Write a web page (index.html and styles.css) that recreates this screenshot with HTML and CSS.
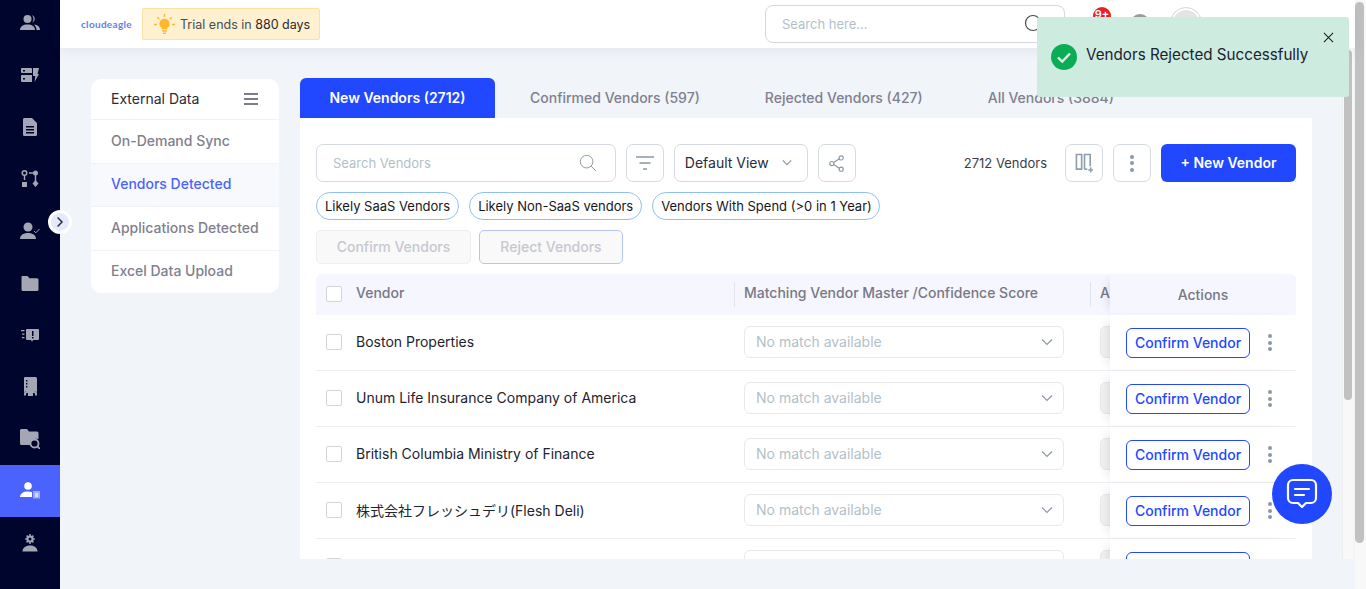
FILE: index.html
```html
<!DOCTYPE html>
<html lang="en">
<head>
    <meta charset="UTF-8">
    <meta name="viewport" content="width=device-width, initial-scale=1.0">
    <title>Vendors Detected</title>
    <link rel="stylesheet" href="styles.css">
</head>
<body>
<div class="app">
    <nav class="sidenav">
        <a class="nav-item"><svg viewBox="0 0 20 20" class="nav-icon"><circle cx="7.5" cy="6" r="4"/><path d="M0 17c0-3.5 3-5.5 7.5-5.5S15 13.500 15 17z"/><path d="M12 2.200a4 4 0 0 1 0 7.600 5.500 5.500 0 0 0 0-7.600zM14 11.500c3.500.3 6 2.200 6 5.500h-3.500c0-2.200-1-4-2.500-5.500z"/></svg></a>
        <a class="nav-item"><svg viewBox="0 0 20 20" class="nav-icon"><path d="M2 3h9a1 1 0 0 1 1 1v4H2a1 1 0 0 1-1-1V4a1 1 0 0 1 1-1zM2 10h10v7H2a1 1 0 0 1-1-1v-5a1 1 0 0 1 1-1zM13 3h6l-1.500 6H19l-4.500 8 .8-6H13z"/><path d="M3 5h2v1.500H3zM3 13h2v1.500H3z" fill="#00052e"/></svg></a>
        <a class="nav-item"><svg viewBox="0 0 20 20" class="nav-icon"><path d="M4 1h8l5 5v11.500a1.500 1.500 0 0 1-1.500 1.500h-11A1.500 1.500 0 0 1 3 17.500v-15A1.500 1.500 0 0 1 4 1z"/><path d="M6 9h8v1.500H6zM6 12h8v1.500H6zM6 15h8v1.500H6z" fill="#00052e"/></svg></a>
        <a class="nav-item"><svg viewBox="0 0 20 20" class="nav-icon"><circle cx="4.500" cy="4" r="2.300" fill="none" stroke="#a4a6b4" stroke-width="1.500"/><path d="M3.800 6h1.400v5H3.800zM2 13h5v5H2zM9 3.300h5v1.400H9z"/><circle cx="15.500" cy="4" r="2.500"/><path d="M14.800 6h1.400v6h-1.400z"/><path d="M15.500 11l3 3.500-3 3.500-3-3.500z"/></svg></a>
        <a class="nav-item"><svg viewBox="0 0 20 20" class="nav-icon"><circle cx="8" cy="6" r="4.500"/><path d="M0 18c0-3.800 3.300-6 8-6s8 2.200 8 6z"/><path d="M14 10l1.800 1.800L19.500 8" fill="none" stroke="#a4a6b4" stroke-width="1"/></svg></a>
        <a class="nav-item"><svg viewBox="0 0 20 20" class="nav-icon"><path d="M2 3h5.500l2 2.200H17a1.500 1.500 0 0 1 1.500 1.500v9.800A1.500 1.500 0 0 1 17 18H3a1.500 1.500 0 0 1-1.500-1.500V3.500z"/></svg></a>
        <a class="nav-item"><svg viewBox="0 0 20 20" class="nav-icon"><path d="M7 4h11a1 1 0 0 1 1 1v9a1 1 0 0 1-1 1h-5l-1 2-1-2H7a1 1 0 0 1-1-1V5a1 1 0 0 1 1-1z"/><path d="M12 6h1.500v5H12zM12 12h1.500v1.500H12z" fill="#00052e"/><path d="M1 5h3.500v1.200H1zM2 8.500h2.500v1.200H2zM2 12h2.500v1.200H2z"/></svg></a>
        <a class="nav-item"><svg viewBox="0 0 20 20" class="nav-icon"><path d="M5 0h10.500A1.500 1.500 0 0 1 17 1.500V17a3 3 0 0 0-3-3H7a3 3 0 0 0-3 3V1a1 1 0 0 1 1-1z"/><path d="M6 3h1.400v1.400H6zM6 6h1.400v1.400H6zM6 9h1.400v1.400H6z" fill="#00052e"/><path d="M8 16h5v3H8z"/><path d="M4 17a3 3 0 0 1 3-3h7a3 3 0 0 1 3 3v1.500h-2V17a1 1 0 0 0-1-1H7a1 1 0 0 0-1 1v1.500H4z"/></svg></a>
        <a class="nav-item"><svg viewBox="0 0 20 20" class="nav-icon"><path d="M1 0h6l2 2.500h8a1.500 1.500 0 0 1 1.500 1.500v6a6 6 0 0 0-8 6H1.500A1.500 1.500 0 0 1 0 14.500V1z"/><circle cx="14.500" cy="14.500" r="4" fill="#00052e" stroke="#a4a6b4" stroke-width="1.800"/><path d="M17.500 17.500L20 20" stroke="#a4a6b4" stroke-width="1.800"/></svg></a>
        <a class="nav-item nav-active"><svg viewBox="0 0 20 20" class="nav-icon icon-white"><circle cx="8" cy="5" r="3.800"/><path d="M0 16c0-3.500 3.300-5.500 8-5.500 1.500 0 2.800.2 4 .7V16z"/><path d="M13 10h7v7.500h-7z" opacity=".45"/><path d="M15 12h3v4h-3z" opacity=".6"/></svg></a>
        <a class="nav-item"><svg viewBox="0 0 20 20" class="nav-icon"><path d="M10 1v10M5.200 6h9.600M6.600 2.600l6.800 6.800M13.400 2.600L6.600 9.400" stroke="#a4a6b4" stroke-width="1.500"/><circle cx="10" cy="6" r="3.600" fill="#a4a6b4"/><circle cx="10" cy="6" r="1.500" fill="#00052e"/><path d="M2.500 18.500c0-3.500 3-6 7.500-6s7.500 2.500 7.500 6z"/></svg></a>
    </nav>
    <button class="nav-toggle"><svg viewBox="0 0 10 14" width="8" height="12"><path d="M2 1.500L7.500 7 2 12.500" fill="none" stroke="#23294d" stroke-width="1.800"/></svg></button>

    <div class="main">
        <header class="topbar">
            <span class="logo">cloudeagle</span>
            <div class="trial">
                <svg viewBox="0 0 22 22" width="21" height="21"><path d="M11 5a5.200 5.200 0 0 0-3 9.500V16h6v-1.500A5.200 5.200 0 0 0 11 5zM8.500 17h5v1.500h-5zM9.500 19.300h3V21h-3z" fill="#fdb92c"/><path d="M11 0v3M3.500 3.500l2 2M18.500 3.500l-2 2M0 11h3M19 11h3" stroke="#fdb92c" stroke-width="1.400"/></svg>
                <span>Trial ends in <b>880 days</b></span>
            </div>
            <div class="top-search">
                <span>Search here...</span>
                <svg viewBox="0 0 20 20" width="20" height="20"><circle cx="9" cy="9" r="7.500" fill="none" stroke="#4a4a4a" stroke-width="1.200"/><path d="M14.500 14.500L19 19" stroke="#4a4a4a" stroke-width="1.200"/></svg>
            </div>
            <div class="top-icons">
                <span class="badge">9+</span>
                <span class="help-dot"></span>
                <span class="avatar"></span>
            </div>
        </header>

        <div class="body">
            <div class="scroll-area">
                <aside class="side-card">
                    <div class="side-head">
                        <span>External Data</span>
                        <svg viewBox="0 0 14 12" width="14" height="12"><path d="M0 1h14M0 6h14M0 11h14" stroke="#50536a" stroke-width="1.600"/></svg>
                    </div>
                    <a class="side-link">On-Demand Sync</a>
                    <a class="side-link side-active">Vendors Detected</a>
                    <a class="side-link">Applications Detected</a>
                    <a class="side-link">Excel Data Upload</a>
                </aside>

                <section class="vendors">
                    <div class="tabs">
                        <a class="tab tab-active">New Vendors (2712)</a>
                        <a class="tab">Confirmed Vendors (597)</a>
                        <a class="tab">Rejected Vendors (427)</a>
                        <a class="tab">All Vendors (3884)</a>
                    </div>
                    <div class="panel">
                        <div class="toolbar">
                            <div class="search-box">
                                <span>Search Vendors</span>
                                <svg viewBox="0 0 20 20" width="18" height="18"><circle cx="8.500" cy="8.500" r="7" fill="none" stroke="#8f98a3" stroke-width="1.100"/><path d="M13.500 13.500L19 19" stroke="#8f98a3" stroke-width="1.100"/></svg>
                            </div>
                            <button class="icon-btn"><svg viewBox="0 0 18 14" width="18" height="14"><path d="M0 1h18M3.500 7h11M7 13h4" stroke="#8c98a4" stroke-width="1.500"/></svg></button>
                            <div class="view-select">
                                <span>Default View</span>
                                <svg viewBox="0 0 12 8" width="10" height="7"><path d="M1 1.500l5 5 5-5" fill="none" stroke="#8c98a4" stroke-width="1.400"/></svg>
                            </div>
                            <button class="icon-btn"><svg viewBox="0 0 16 18" width="15" height="17"><circle cx="13" cy="3" r="2.200" fill="none" stroke="#8c98a4" stroke-width="1.200"/><circle cx="3" cy="9" r="2.200" fill="none" stroke="#8c98a4" stroke-width="1.200"/><circle cx="13" cy="15" r="2.200" fill="none" stroke="#8c98a4" stroke-width="1.200"/><path d="M5 8l6-4M5 10l6 4" stroke="#8c98a4" stroke-width="1.200"/></svg></button>
                            <span class="count">2712 Vendors</span>
                            <button class="icon-btn"><svg viewBox="0 0 20 21" width="19" height="20"><path d="M1.500 1.500h5.500v15.500H1.500zM10 17V1.500h6V14" fill="none" stroke="#8c9eab" stroke-width="1.700"/><path d="M10 17h3" stroke="#8c9eab" stroke-width="1.700"/><path d="M16.500 15v5.500M14 17.800h5" stroke="#8c9eab" stroke-width="1.600"/></svg></button>
                            <button class="icon-btn"><span class="dots"></span></button>
                            <button class="btn-new">+ New Vendor</button>
                        </div>
                        <div class="chips">
                            <span class="chip">Likely SaaS Vendors</span>
                            <span class="chip">Likely Non-SaaS vendors</span>
                            <span class="chip chip-last">Vendors With Spend (&gt;0 in 1 Year)</span>
                        </div>
                        <div class="bulk">
                            <button class="bulk-btn">Confirm Vendors</button>
                            <button class="bulk-btn bulk-reject">Reject Vendors</button>
                        </div>
                        <div class="table">
                            <div class="row row-head">
                                <div class="cell-name"><span class="check"></span>Vendor</div>
                                <div class="cell-match"><span>Matching Vendor Master /Confidence Score</span></div>
                                <div class="cell-extra"><span>A</span></div>
                                <div class="cell-actions">Actions</div>
                            </div>
                            <div class="row">
                                <div class="cell-name"><span class="check"></span>Boston Properties</div>
                                <div class="cell-match"><div class="match-select">No match available<svg viewBox="0 0 12 8" width="12" height="8"><path d="M1 1.500l5 5 5-5" fill="none" stroke="#8c98a4" stroke-width="1.200"/></svg></div></div>
                                <div class="cell-extra"><span class="stub"></span></div>
                                <div class="cell-actions"><button class="btn-confirm">Confirm Vendor</button><span class="dots"></span></div>
                            </div>
                            <div class="row">
                                <div class="cell-name"><span class="check"></span>Unum Life Insurance Company of America</div>
                                <div class="cell-match"><div class="match-select">No match available<svg viewBox="0 0 12 8" width="12" height="8"><path d="M1 1.500l5 5 5-5" fill="none" stroke="#8c98a4" stroke-width="1.200"/></svg></div></div>
                                <div class="cell-extra"><span class="stub"></span></div>
                                <div class="cell-actions"><button class="btn-confirm">Confirm Vendor</button><span class="dots"></span></div>
                            </div>
                            <div class="row">
                                <div class="cell-name"><span class="check"></span>British Columbia Ministry of Finance</div>
                                <div class="cell-match"><div class="match-select">No match available<svg viewBox="0 0 12 8" width="12" height="8"><path d="M1 1.500l5 5 5-5" fill="none" stroke="#8c98a4" stroke-width="1.200"/></svg></div></div>
                                <div class="cell-extra"><span class="stub"></span></div>
                                <div class="cell-actions"><button class="btn-confirm">Confirm Vendor</button><span class="dots"></span></div>
                            </div>
                            <div class="row">
                                <div class="cell-name"><span class="check"></span>株式会社フレッシュデリ(Flesh Deli)</div>
                                <div class="cell-match"><div class="match-select">No match available<svg viewBox="0 0 12 8" width="12" height="8"><path d="M1 1.500l5 5 5-5" fill="none" stroke="#8c98a4" stroke-width="1.200"/></svg></div></div>
                                <div class="cell-extra"><span class="stub"></span></div>
                                <div class="cell-actions"><button class="btn-confirm">Confirm Vendor</button><span class="dots"></span></div>
                            </div>
                            <div class="row">
                                <div class="cell-name"><span class="check"></span></div>
                                <div class="cell-match"><div class="match-select"></div></div>
                                <div class="cell-extra"><span class="stub"></span></div>
                                <div class="cell-actions"><button class="btn-confirm"></button></div>
                            </div>
                        </div>
                    </div>
                </section>
            </div>
            <div class="inner-bar"><span class="inner-thumb"></span></div>
        </div>
        <div class="bottom-strip"></div>
    </div>

    <div class="outer-bar"><span class="outer-thumb"></span></div>
</div>

<div class="toast">
    <svg viewBox="0 0 26 26" width="26" height="26"><circle cx="13" cy="13" r="13" fill="#0aad54"/><path d="M7 13.500l4.200 4L19 9.500" fill="none" stroke="#dff5e9" stroke-width="2.400"/></svg>
    <span class="toast-text">Vendors Rejected Successfully</span>
    <svg class="toast-close" viewBox="0 0 12 12" width="11" height="11"><path d="M1 1l10 10M11 1L1 11" stroke="#1a1a1a" stroke-width="1.100"/></svg>
</div>

<button class="chat-btn">
    <svg viewBox="0 0 34 34" width="34" height="34"><path d="M8 3h18a5 5 0 0 1 5 5v13a5 5 0 0 1-5 5h-5l-4 4-4-4H8a5 5 0 0 1-5-5V8a5 5 0 0 1 5-5z" fill="none" stroke="#fff" stroke-width="2.200" stroke-linejoin="round"/><path d="M10 12h14M10 18h9" stroke="#fff" stroke-width="2.200" stroke-linecap="round"/></svg>
</button>
</body>
</html>
```

FILE: styles.css
```css
* {
    box-sizing: border-box;
}

body {
    margin: 0;
    height: 589px;
    overflow: hidden;
    background-color: #f1f4f9;
    font-family: Inter, "Noto Sans CJK JP", sans-serif;
    font-size: 14px;
    color: #222;
}

button {
    font-family: inherit;
    cursor: pointer;
}

.app {
    display: flex;
    height: 589px;
}

/* left navigation */
.sidenav {
    flex: none;
    width: 60px;
    padding-top: 0;
    margin-top: -3px;
    background-color: #00052e;
}

.nav-item {
    display: flex;
    align-items: center;
    justify-content: center;
    height: 52px;
}

.nav-icon {
    width: 20px;
    height: 20px;
    fill: #a4a6b4;
}

.nav-active {
    background-color: #4a63ff;
}

.icon-white {
    fill: #fff;
}

.nav-toggle {
    position: absolute;
    left: 48px;
    top: 210px;
    z-index: 5;
    display: flex;
    align-items: center;
    justify-content: center;
    width: 24px;
    height: 24px;
    padding: 0;
    border: 3px solid #fff;
    border-radius: 50%;
    background-color: #e6e9fb;
}

/* top header */
.main {
    display: flex;
    flex-direction: column;
    flex: 1;
    min-width: 0;
}

.topbar {
    position: relative;
    z-index: 2;
    flex: none;
    display: flex;
    align-items: center;
    height: 48px;
    background-color: #fff;
    box-shadow: 0 2px 14px rgba(30, 50, 90, 0.07);
}

.logo {
    width: 50px;
    margin-left: 21px;
    font-family: Lato, sans-serif;
    font-size: 10px;
    font-weight: 700;
    letter-spacing: 0.3px;
    white-space: nowrap;
    color: #6480ea;
}

.trial {
    display: flex;
    align-items: center;
    gap: 5px;
    height: 32px;
    width: 178px;
    margin-left: 11px;
    padding-left: 11px;
    border: 1px solid #fbe0a8;
    border-radius: 2px;
    background-color: #fff0cf;
    font-size: 12.500px;
    color: #4a4a55;
    white-space: nowrap;
}

.trial b {
    font-weight: 400;
    color: #2a2a32;
}

.top-search {
    display: flex;
    align-items: center;
    justify-content: space-between;
    width: 300px;
    height: 38px;
    margin-left: 445px;
    padding: 0 20px 0 16px;
    border: 1px solid #d5d6e4;
    border-radius: 8px;
    font-size: 13px;
    color: #b3bfc8;
}

.top-icons {
    display: flex;
    align-self: flex-start;
    margin-left: 28px;
}

.badge {
    width: 18px;
    height: 18px;
    margin-top: 7px;
    border-radius: 50%;
    background-color: #ee1c25;
    color: #fff;
    font-size: 11px;
    font-weight: 600;
    line-height: 14px;
    text-align: center;
}

.help-dot {
    width: 20px;
    height: 20px;
    margin: 14px 0 0 19px;
    border-radius: 50%;
    background-color: #9a9a9a;
}

.avatar {
    width: 32px;
    height: 32px;
    margin: 7px 0 0 20px;
    border: 1px solid #d9d9e2;
    border-radius: 50%;
    background-color: #e4e4e4;
    box-shadow: inset 0 0 0 2px #fff;
}

/* scrolling body */
.body {
    flex: none;
    display: flex;
    height: 511px;
    padding-right: 2px;
}

.scroll-area {
    flex: 1;
    display: flex;
    align-items: flex-start;
    gap: 21px;
    min-width: 0;
    height: 511px;
    overflow: hidden;
    padding: 30px 30px 0 31px;
}

.inner-bar {
    flex: none;
    width: 11px;
    padding: 2px 1px 0 2px;
    background-color: #f8f8f8;
    border-left: 1px solid #eee;
}

.inner-thumb {
    display: block;
    width: 8px;
    height: 350px;
    margin-left: -1px;
    border-radius: 4px;
    background-color: #c1c1c1;
}

.bottom-strip {
    flex: 1;
    background-color: #f1f4f9;
}

.outer-bar {
    flex: none;
    width: 11px;
    padding-top: 2px;
    background-color: #f8f8f8;
}

.outer-thumb {
    display: block;
    width: 9px;
    height: 541px;
    border-radius: 5px;
    background-color: #c1c1c1;
}

/* left card */
.side-card {
    flex: none;
    width: 188px;
    margin-top: 1px;
    border-radius: 10px;
    background-color: #fff;
    overflow: hidden;
}

.side-head {
    display: flex;
    align-items: center;
    justify-content: space-between;
    height: 40px;
    padding: 0 21px 1px 20px;
    color: #2b2b38;
}

.side-link {
    display: flex;
    align-items: center;
    height: 43.500px;
    padding: 0 0 2px 20px;
    border-top: 1px solid #f0f2f7;
    font-weight: 500;
    color: #80808e;
}

.side-active {
    background-color: #f8f9fc;
    color: #4a63ff;
}

/* tabs */
.vendors {
    flex: none;
    width: 1012px;
}

.tabs {
    display: flex;
    gap: 5px;
    height: 40px;
}

.tab {
    display: flex;
    align-items: center;
    padding: 0 30px 2px;
    border-radius: 6px 6px 0 0;
    font-weight: 500;
    color: #80808e;
    white-space: nowrap;
}

.tab-active {
    justify-content: center;
    width: 195px;
    padding: 0 0 2px;
    background-color: #2148ff;
    color: #fff;
    font-weight: 600;
}

.panel {
    height: 450px;
    padding: 26px 16px 0;
    background-color: #fff;
    overflow: hidden;
}

.toolbar {
    display: flex;
    align-items: center;
    gap: 10px;
    height: 38px;
}

.search-box {
    display: flex;
    align-items: center;
    justify-content: space-between;
    width: 300px;
    height: 38px;
    padding: 0 18px 0 16px;
    border: 1px solid #d5dae2;
    border-radius: 7px;
    font-size: 13px;
    color: #b3bfc8;
}

.icon-btn {
    display: flex;
    flex: none;
    align-items: center;
    justify-content: center;
    width: 38px;
    height: 38px;
    padding: 0;
    border: 1px solid #d5dae2;
    border-radius: 7px;
    background-color: #fff;
}

.view-select {
    display: flex;
    align-items: center;
    gap: 13px;
    width: 134px;
    height: 38px;
    padding: 0 0 2px 10px;
    border: 1px solid #d5dae2;
    border-radius: 7px;
    color: #2b2b38;
}

.count {
    margin: 0 8px 0 98px;
    font-size: 13px;
    color: #3c3c48;
    white-space: nowrap;
}

.btn-new {
    flex: none;
    width: 135px;
    height: 38px;
    padding: 0 0 2px;
    border: none;
    border-radius: 6px;
    background-color: #2148ff;
    color: #fff;
    font-size: 14px;
    font-weight: 600;
}

.dots,
.dots::before,
.dots::after {
    display: block;
    width: 4px;
    height: 4px;
    border-radius: 50%;
    background-color: #8c98a4;
}

.dots {
    position: relative;
}

.dots::before,
.dots::after {
    content: "";
    position: absolute;
    left: 0;
}

.dots::before {
    top: -6.500px;
}

.dots::after {
    top: 6.500px;
}

.chips {
    display: flex;
    gap: 10px;
    margin-top: 10px;
}

.chip {
    height: 28px;
    padding: 0 8px;
    border: 1px solid #8fc0f5;
    border-radius: 14px;
    font-size: 13px;
    line-height: 26px;
    color: #16161c;
    white-space: nowrap;
}

.chip-last {
    padding-right: 7px;
}

.bulk {
    display: flex;
    gap: 8px;
    margin-top: 10px;
}

.bulk-btn {
    width: 155px;
    height: 34px;
    padding: 0 0 2px;
    border: 1px solid #eeeef1;
    border-radius: 5px;
    background-color: #f9f9fa;
    color: #c6c8ce;
    font-size: 14px;
    font-weight: 500;
}

.bulk-reject {
    width: 144px;
    border-color: #b7c3f8;
}

/* vendor table */
.table {
    margin-top: 10px;
}

.row {
    display: flex;
    height: 56px;
    border-bottom: 1px solid #eceef2;
    color: #23232e;
}

.row-head {
    height: 41px;
    border-bottom: none;
    border-radius: 6px 6px 0 0;
    background-color: #f5f6ff;
    color: #787885;
    font-weight: 500;
}

.cell-name {
    display: flex;
    flex: none;
    align-items: center;
    width: 418px;
    padding: 0 0 2px 10px;
}

.row-head .cell-name,
.row-head .cell-match,
.row-head .cell-extra {
    padding-bottom: 4px;
}

.row-head .check {
    margin-top: 2px;
}

.check {
    flex: none;
    width: 16px;
    height: 16px;
    margin-right: 14px;
    border: 1px solid #d3d5da;
    border-radius: 2px;
    background-color: #fff;
}

.cell-match {
    display: flex;
    flex: none;
    align-items: center;
    width: 356px;
    padding: 0 0 2px 10px;
}

.row-head .cell-match span,
.row-head .cell-extra span {
    display: block;
}

.row-head .cell-match,
.row-head .cell-extra {
    position: relative;
}

.row-head .cell-match::before,
.row-head .cell-extra::before {
    content: "";
    position: absolute;
    left: 0;
    top: 8px;
    width: 1px;
    height: 25px;
    background-color: #e3e4ee;
}

.match-select {
    display: flex;
    align-items: center;
    justify-content: space-between;
    width: 320px;
    height: 32px;
    padding: 0 10px 0 11px;
    border: 1px solid #e6e8ec;
    border-radius: 6px;
    color: #b3bfc8;
}

.cell-extra {
    display: flex;
    flex: none;
    align-items: center;
    width: 20px;
    padding: 0 0 2px 10px;
    overflow: hidden;
}

.stub {
    flex: none;
    width: 40px;
    height: 32px;
    border: 1px solid #e6e8ec;
    border-radius: 6px 0 0 6px;
    background-color: #f3f3f3;
}

.cell-actions {
    position: relative;
    display: flex;
    flex: none;
    align-items: center;
    width: 186px;
    padding-left: 16px;
    background-color: #fff;
    box-shadow: -8px 0 10px -6px rgba(60, 60, 90, 0.14);
}

.row-head .cell-actions {
    justify-content: center;
    padding-left: 0;
    border-radius: 0 6px 0 0;
    background-color: #f5f6ff;
}

.btn-confirm {
    width: 124px;
    height: 30px;
    margin-right: 18px;
    padding: 0;
    border: 1px solid #2148ff;
    border-radius: 6px;
    background-color: #fff;
    color: #2148ff;
    font-size: 14px;
    font-weight: 500;
}

/* overlays */
.toast {
    position: absolute;
    left: 1037px;
    top: 17px;
    z-index: 10;
    display: flex;
    align-items: flex-start;
    width: 312px;
    height: 80px;
    padding: 27px 0 0 14px;
    border-radius: 3px;
    background-color: #ceebe0;
}

.toast-text {
    margin: 1px 0 0 9px;
    font-size: 15.200px;
    line-height: 20px;
    color: #1c2230;
    white-space: nowrap;
}

.toast-close {
    position: absolute;
    right: 15px;
    top: 15px;
}

.chat-btn {
    position: absolute;
    left: 1272px;
    top: 464px;
    z-index: 10;
    display: flex;
    align-items: center;
    justify-content: center;
    width: 60px;
    height: 60px;
    padding: 0;
    border: none;
    border-radius: 50%;
    background-color: #2148ff;
}
```
